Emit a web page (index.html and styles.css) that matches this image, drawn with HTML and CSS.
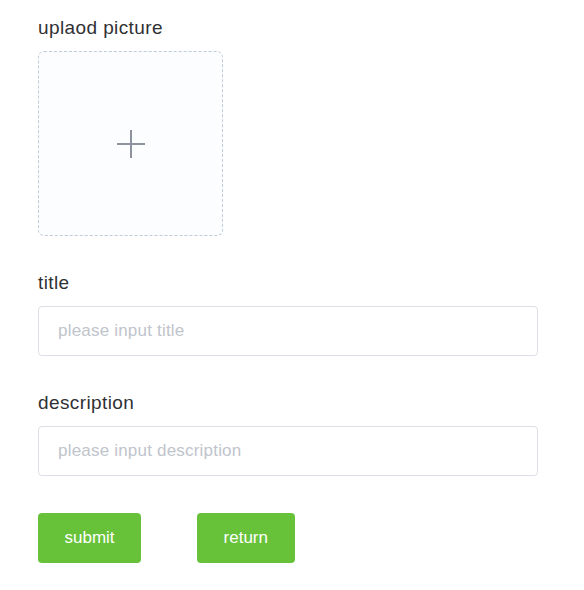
FILE: index.html
```html
<!DOCTYPE html>
<html>
<head>
<meta charset="utf-8">
<link rel="stylesheet" href="styles.css">
</head>
<body>
<form class="form">
  <div class="item">
    <label class="label">uplaod picture</label>
    <div class="upload">
      <svg class="plus" width="28" height="28" viewBox="0 0 28 28"><path d="M0 14H28M14 0V28" stroke="#8c939d" stroke-width="2" fill="none"/></svg>
    </div>
  </div>
  <div class="item">
    <label class="label">title</label>
    <input class="input" type="text" placeholder="please input title">
  </div>
  <div class="item">
    <label class="label">description</label>
    <input class="input" type="text" placeholder="please input description">
  </div>
  <div class="actions">
    <button type="button" class="btn">submit</button>
    <button type="button" class="btn">return</button>
  </div>
</form>
</body>
</html>
```

FILE: styles.css
```css
html, body {
  margin: 0;
  padding: 0;
  background: #fff;
  font-family: "Liberation Sans", Arial, sans-serif;
}
.form {
  padding: 16px 0 0 38px;
  width: 500px;
}
.item {
  display: flex;
  flex-direction: column;
  align-items: flex-start;
  margin-bottom: 35px;
}
.label {
  font-size: 19px;
  letter-spacing: 0.4px;
  line-height: 24px;
  color: #303133;
  margin-bottom: 11px;
}
.upload {
  box-sizing: border-box;
  width: 185px;
  height: 185px;
  border: 1px dashed #c0ccda;
  border-radius: 6px;
  background: #fbfdff;
  display: flex;
  align-items: center;
  justify-content: center;
}
.input {
  box-sizing: border-box;
  width: 500px;
  height: 50px;
  border: 1px solid #dcdfe6;
  border-radius: 4px;
  padding: 0 19px;
  font-family: "Liberation Sans", Arial, sans-serif;
  font-size: 17px;
  letter-spacing: 0.2px;
  color: #606266;
  outline: none;
}
.input::placeholder {
  color: #c0c4cc;
}
.actions {
  display: flex;
  gap: 56px;
  padding-top: 2px;
}
.btn {
  height: 50px;
  padding: 0 26.5px;
  border: none;
  border-radius: 4px;
  background: #67c23a;
  color: #fff;
  font-family: "Liberation Sans", Arial, sans-serif;
  font-size: 17px;
}
```
